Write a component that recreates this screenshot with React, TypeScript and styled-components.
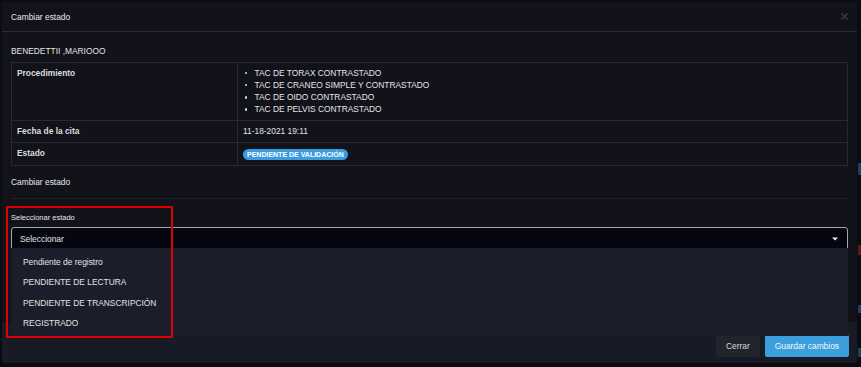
import React from "react";
import styled, { createGlobalStyle } from "styled-components";

const GlobalStyle = createGlobalStyle`
  html, body {
    margin: 0;
    padding: 0;
    background: #0b0b11;
    font-family: "Liberation Sans", Arial, sans-serif;
    color: #e4e4e6;
  }
`;

const procedimientos = [
  "TAC DE TORAX CONTRASTADO",
  "TAC DE CRANEO SIMPLE Y CONTRASTADO",
  "TAC DE OIDO CONTRASTADO",
  "TAC DE PELVIS CONTRASTADO",
];

const estados = [
  "Pendiente de registro",
  "PENDIENTE DE LECTURA",
  "PENDIENTE DE TRANSCRIPCIÓN",
  "REGISTRADO",
];

const Page = styled.div`
  position: relative;
  width: 861px;
  height: 367px;
  overflow: hidden;
  padding: 2px 4px 0 2px;
  box-sizing: border-box;
`;

const BackdropMark = styled.span<{ $top: number; $height: number; $color: string }>`
  position: absolute;
  right: 0;
  top: ${(p) => p.$top}px;
  width: 3px;
  height: ${(p) => p.$height}px;
  background: ${(p) => p.$color};
  opacity: 0.55;
`;

const Modal = styled.div`
  position: relative;
  width: 855px;
  background: #12121b;
  border-radius: 4px;
  overflow: hidden;
`;

const Header = styled.div`
  height: 29px;
  padding: 0 9px;
  display: flex;
  align-items: center;
  justify-content: space-between;
  border-bottom: 1px solid #2a2b34;
`;

const Title = styled.div`
  font-size: 8.4px;
  line-height: 12px;
  color: #e8e8ea;
`;

const CloseButton = styled.button`
  border: 0;
  background: none;
  padding: 0;
  display: flex;
  cursor: pointer;
`;

const Body = styled.div`
  padding: 13px 9px 71px;
`;

const Patient = styled.div`
  font-size: 8.4px;
  line-height: 12px;
  margin-bottom: 5px;
`;

const Table = styled.table`
  width: 100%;
  table-layout: fixed;
  border-collapse: collapse;
  font-size: 8.4px;
  line-height: 12.1px;
`;

const LabelCell = styled.td`
  width: 215px;
  border: 1px solid #272832;
  padding: 4px 5px 5px;
  vertical-align: top;
  font-weight: bold;
  color: #dcdcde;
`;

const ValueCell = styled.td`
  border: 1px solid #272832;
  padding: 4px 5px 5px;
  vertical-align: top;
`;

const ProcList = styled.ul`
  margin: 0;
  padding: 0 0 0 11.5px;
  list-style: none;

  li {
    position: relative;
  }

  li::before {
    content: "";
    position: absolute;
    left: -10px;
    top: 5px;
    width: 2.4px;
    height: 2.4px;
    border-radius: 50%;
    background: #d8d8da;
  }
`;

const Badge = styled.span`
  display: inline-block;
  height: 11px;
  line-height: 11px;
  padding: 0 4px;
  border-radius: 6px;
  background: #3b9be0;
  color: #fff;
  font-size: 7px;
  font-weight: bold;
  vertical-align: middle;
`;

const SectionTitle = styled.div`
  margin-top: 10px;
  padding-bottom: 10.5px;
  font-size: 8.4px;
  line-height: 12px;
  border-bottom: 1px solid #1f2029;
`;

const FieldLabel = styled.div`
  margin-top: 13.5px;
  font-size: 7.5px;
  line-height: 10px;
  color: #e6e6e8;
`;

const Select = styled.div`
  position: relative;
  margin-top: 4.5px;
  height: 22px;
  border: 1px solid #a3a3a8;
  border-radius: 3px;
  background: #05060f;
  padding: 0 9px 0 8px;
  display: flex;
  align-items: center;
  justify-content: space-between;
  font-size: 8.4px;
  line-height: 12px;
`;

const Menu = styled.ul`
  position: absolute;
  left: -1px;
  right: -1px;
  top: 20px;
  height: 88px;
  box-sizing: border-box;
  margin: 0;
  padding: 3.5px 0 0;
  list-style: none;
  background: #1c1d2a;
  z-index: 2;
`;

const MenuItem = styled.li`
  height: 20.4px;
  line-height: 20.4px;
  padding-left: 12px;
  font-size: 8.4px;
  color: #e2e2e4;
`;

const Footer = styled.div`
  background: #181a26;
  padding: 13px 8px 6.5px;
  display: flex;
  justify-content: flex-end;
  gap: 5px;
`;

const Button = styled.button<{ $primary?: boolean }>`
  height: 21.5px;
  padding: 0 10px;
  border: 0;
  border-radius: 2px;
  font-family: "Liberation Sans", Arial, sans-serif;
  font-size: 8.4px;
  color: ${(p) => (p.$primary ? "#f2f8fd" : "#d8d8da")};
  background: ${(p) => (p.$primary ? "#3a9fdb" : "#22242c")};
`;

const Highlight = styled.div`
  position: absolute;
  left: 4px;
  top: 204px;
  width: 167px;
  height: 132px;
  border: 2px solid #e00000;
  box-sizing: border-box;
  border-radius: 1px;
  pointer-events: none;
  z-index: 3;
`;

export default function App() {
  return (
    <Page>
      <GlobalStyle />
      <BackdropMark $top={163} $height={12} $color="#2d6f9e" />
      <BackdropMark $top={245} $height={10} $color="#9a2a2a" />
      <BackdropMark $top={305} $height={8} $color="#2d6f9e" />
      <BackdropMark $top={348} $height={9} $color="#2d6f9e" />
      <Modal>
        <Header>
          <Title>Cambiar estado</Title>
          <CloseButton aria-label="Cerrar">
            <svg width="7" height="7" viewBox="0 0 7 7">
              <path d="M0.5 0.5 L6.5 6.5 M6.5 0.5 L0.5 6.5" stroke="#3a3b45" strokeWidth="1.4" />
            </svg>
          </CloseButton>
        </Header>
        <Body>
          <Patient>BENEDETTII ,MARIOOO</Patient>
          <Table>
            <tbody>
              <tr>
                <LabelCell>Procedimiento</LabelCell>
                <ValueCell>
                  <ProcList>
                    {procedimientos.map((p) => (
                      <li key={p}>{p}</li>
                    ))}
                  </ProcList>
                </ValueCell>
              </tr>
              <tr>
                <LabelCell>Fecha de la cita</LabelCell>
                <ValueCell>11-18-2021 19:11</ValueCell>
              </tr>
              <tr>
                <LabelCell>Estado</LabelCell>
                <ValueCell>
                  <Badge>PENDIENTE DE VALIDACIÓN</Badge>
                </ValueCell>
              </tr>
            </tbody>
          </Table>
          <SectionTitle>Cambiar estado</SectionTitle>
          <FieldLabel>Seleccionar estado</FieldLabel>
          <Select>
            <span>Seleccionar</span>
            <svg width="6" height="4" viewBox="0 0 6 4">
              <polygon points="0,0.5 6,0.5 3,3.5" fill="#f0f0f0" />
            </svg>
            <Menu>
              {estados.map((e) => (
                <MenuItem key={e}>{e}</MenuItem>
              ))}
            </Menu>
          </Select>
        </Body>
        <Footer>
          <Button>Cerrar</Button>
          <Button $primary>Guardar cambios</Button>
        </Footer>
        <Highlight />
      </Modal>
    </Page>
  );
}
